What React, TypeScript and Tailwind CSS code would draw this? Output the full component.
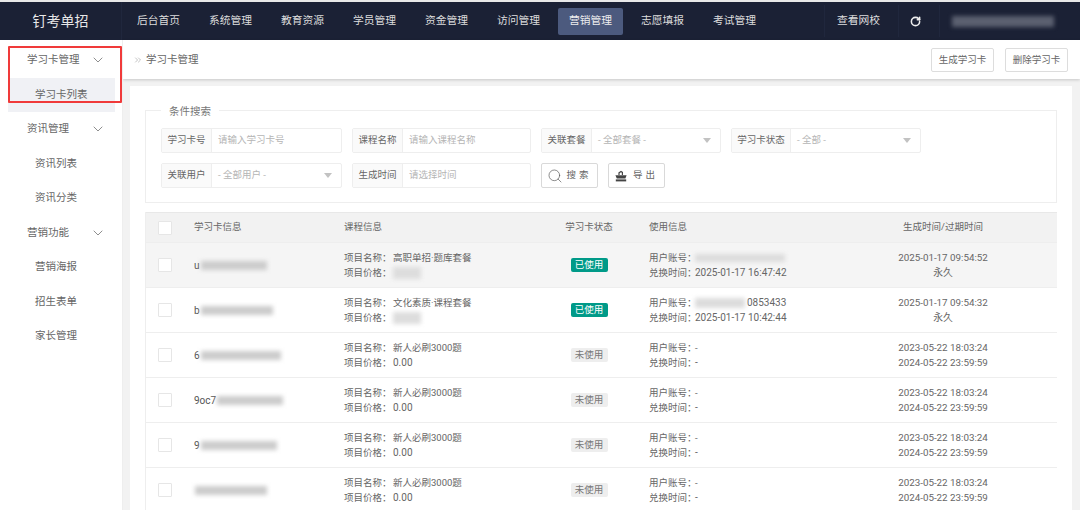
import { RotateCw, Search, ChevronDown, ChevronsRight } from "lucide-react";

const navs = ['后台首页', '系统管理', '教育资源', '学员管理', '资金管理', '访问管理', '营销管理', '志愿填报', '考试管理'];

const menus = [
    { title: '学习卡管理', subs: ['学习卡列表'] },
    { title: '资讯管理', subs: ['资讯列表', '资讯分类'] },
    { title: '营销功能', subs: ['营销海报', '招生表单', '家长管理'] },
];

interface rowType {
    prefix: string;
    nameW: number;
    course: string;
    used: boolean;
    user: string;
    time: string;
    created: string;
    expired: string;
}

const rows: rowType[] = [
    { prefix: 'u', nameW: 66, course: '高职单招·题库套餐', used: true, user: '', time: '2025-01-17 16:47:42', created: '2025-01-17 09:54:52', expired: '永久' },
    { prefix: 'b', nameW: 72, course: '文化素质·课程套餐', used: true, user: '0853433', time: '2025-01-17 10:42:44', created: '2025-01-17 09:54:32', expired: '永久' },
    { prefix: '6', nameW: 80, course: '新人必刷3000题', used: false, user: '-', time: '-', created: '2023-05-22 18:03:24', expired: '2024-05-22 23:59:59' },
    { prefix: '9oc7', nameW: 66, course: '新人必刷3000题', used: false, user: '-', time: '-', created: '2023-05-22 18:03:24', expired: '2024-05-22 23:59:59' },
    { prefix: '9', nameW: 76, course: '新人必刷3000题', used: false, user: '-', time: '-', created: '2023-05-22 18:03:24', expired: '2024-05-22 23:59:59' },
    { prefix: '', nameW: 72, course: '新人必刷3000题', used: false, user: '-', time: '-', created: '2023-05-22 18:03:24', expired: '2024-05-22 23:59:59' },
];

function Field({ label, holder, w, labelW = 'w-[50px]', select }: { label: string; holder: string; w: string; labelW?: string; select?: boolean }) {
    return (
        <div className={`${w} h-[25px] flex border border-[#eeeeee] rounded-[2px] text-[9.5px]`}>
            <div className={`${labelW} shrink-0 bg-[#fafafa] border-r border-[#eeeeee] flex items-center justify-center text-[#666666]`}>{label}</div>
            <div className="flex-1 flex items-center justify-between px-[6px] text-[#b5b5b5]">
                <span>{holder}</span>
                {select && <span className="mr-[3px] w-0 h-0 border-x-[4px] border-x-transparent border-t-[5px] border-t-[#c2c2c2]"></span>}
            </div>
        </div>
    );
}

function Check() {
    return <div className="w-[14px] h-[14px] bg-white border border-[#e6e6e6] rounded-[1px] shrink-0"></div>;
}

export default function App() {
    return (
        <div className="w-[1080px] h-[510px] overflow-hidden flex flex-col bg-[#f2f2f2] text-[#666666] font-['Roboto','Noto_Sans_CJK_SC',sans-serif]">
            <div className="h-[2px] shrink-0 bg-[#e8e8e8]"></div>
            <header className="h-[38px] shrink-0 bg-[#1b2135] flex items-center text-white">
                <div className="w-[122px] h-full shrink-0 flex items-center justify-center text-[14px] text-[#e8e8e8] border-r border-[#20273d]">钉考单招</div>
                <nav className="flex gap-[7px] pl-[4px]">
                    {navs.map(n => (
                        <div key={n} className={`h-[27px] w-[65px] flex items-center justify-center text-[10.75px] rounded-[2px] ${n === '营销管理' ? 'bg-[#4c5a7e] text-[#eeeeee]' : 'text-[#dddddd]'}`}>{n}</div>
                    ))}
                </nav>
                <div className="ml-auto flex h-[32px] items-center">
                    <div className="w-[75px] h-full flex items-center justify-center pr-[6px] text-[10.75px] text-[#dddddd] border-x border-[#20273d]">查看网校</div>
                    <div className="w-[41px] h-full flex items-center justify-center pr-[8px] border-r border-[#20273d]">
                        <RotateCw size={11} strokeWidth={3.4} color="#eeeeee" />
                    </div>
                    <div className="w-[140px] h-full flex items-center pl-[12px]">
                        <div className="w-[102px] h-[11px] bg-[#5b6070] blur-[2px]"></div>
                    </div>
                </div>
            </header>
            <div className="flex-1 flex min-h-0">
                <aside className="relative w-[123px] shrink-0 bg-white border-r border-[#eeeeee] pl-[8px] pr-[7px] pt-[3px]">
                    {menus.map(m => (
                        <div key={m.title}>
                            <div className="h-[34.5px] flex items-center justify-between pl-[19px] pr-[9px] text-[10.5px] text-[#666666]">
                                <span>{m.title}</span>
                                <ChevronDown size={16} strokeWidth={1} color="#555555" />
                            </div>
                            {m.subs.map(s => (
                                <div key={s} className={`h-[34.5px] flex items-center pl-[27px] text-[10.5px] text-[#666666] ${s === '学习卡列表' ? 'bg-[#f0f1f5]' : ''}`}>{s}</div>
                            ))}
                        </div>
                    ))}
                    <div className="absolute left-[8px] top-[6px] w-[114px] h-[57px] border-2 border-[#f03a3a] rounded-[1px]"></div>
                </aside>
                <main className="flex-1 min-w-0 flex flex-col">
                    <div className="h-[39px] shrink-0 bg-white shadow-[0_1px_3px_rgba(0,0,0,0.18)] flex items-center pl-[10px] pr-[12px]">
                        <ChevronsRight size={10} strokeWidth={1.2} color="#888888" />
                        <span className="ml-[3px] text-[10.5px] text-[#666666]">学习卡管理</span>
                        <div className="ml-auto flex gap-[11px]">
                            <div className="w-[63px] h-[24px] mt-[1px] bg-white border border-[#dddddd] rounded-[2px] flex items-center justify-center text-[9.5px]">生成学习卡</div>
                            <div className="w-[63px] h-[24px] mt-[1px] bg-white border border-[#dddddd] rounded-[2px] flex items-center justify-center text-[9.5px]">删除学习卡</div>
                        </div>
                    </div>
                    <div className="mt-[7px] ml-[7px] mr-[8px] flex-1 min-h-0 overflow-hidden bg-white px-[15px] pt-[24px]">
                        <div className="relative h-[93px] border border-[#eeeeee] pl-[15px] pr-[15px] pt-[17px]">
                            <span className="absolute left-[15px] top-[-7px] bg-white px-[8px] text-[10.5px] text-[#777777]">条件搜索</span>
                            <div className="flex gap-[10px]">
                                <Field label="学习卡号" holder="请输入学习卡号" w="w-[181px]" />
                                <Field label="课程名称" holder="请输入课程名称" w="w-[179px]" />
                                <Field label="关联套餐" holder="- 全部套餐 -" w="w-[180px]" select />
                                <Field label="学习卡状态" holder="- 全部 -" w="w-[190px]" labelW="w-[59px]" select />
                            </div>
                            <div className="flex gap-[10px] mt-[10px]">
                                <Field label="关联用户" holder="- 全部用户 -" w="w-[181px]" select />
                                <Field label="生成时间" holder="请选择时间" w="w-[179px]" />
                                <div className="w-[57px] h-[25px] border border-[#d9d9d9] rounded-[2px] flex items-center justify-center gap-[3px] text-[9.5px]">
                                    <Search size={16} strokeWidth={1} color="#555555" />
                                    <span className="tracking-[3px]">搜索</span>
                                </div>
                                <div className="w-[57px] h-[25px] border border-[#d9d9d9] rounded-[2px] flex items-center justify-center gap-[6px] text-[9.5px]">
                                    <svg width="12" height="12" viewBox="0 0 12 12">
                                        <path d="M3.4 5V2.6L6 0.8l2 1.2v3H6.8V2.8L6 2.3l-1.4 1V5z" fill="#444444" />
                                        <path d="M0.4 5.2h11.2L10.4 8.6H1.8z" fill="#444444" />
                                        <path d="M0.8 9.4h10.4v2H0.8z" fill="#444444" />
                                    </svg>
                                    <span className="tracking-[3px]">导出</span>
                                </div>
                            </div>
                        </div>
                        <div className="mt-[9px] border-l border-[#eeeeee]">
                            <div className="h-[30px] bg-[#f2f2f2] border-t border-[#e8e8e8] flex items-center text-[9.5px] text-[#666666]">
                                <div className="w-[48px] pl-[12px]"><Check /></div>
                                <div className="w-[150px]">学习卡信息</div>
                                <div className="w-[200px]">课程信息</div>
                                <div className="w-[90px] text-center">学习卡状态</div>
                                <div className="w-[15px]"></div>
                                <div className="w-[210px]">使用信息</div>
                                <div className="w-[168px] text-center">生成时间/过期时间</div>
                            </div>
                            {rows.map((r, i) => (
                                <div key={i} className={`h-[45px] flex items-center text-[9.5px] border-t border-[#eeeeee] ${i === 0 ? 'bg-[#f5f5f5]' : ''}`}>
                                    <div className="w-[48px] pl-[12px]"><Check /></div>
                                    <div className="w-[150px] flex items-center">
                                        <span className="text-[#555555] text-[10px]">{r.prefix}</span>
                                        <span className="h-[9px] bg-[#cccccc] blur-[2px] ml-[1px]" style={{ width: r.nameW }}></span>
                                    </div>
                                    <div className="w-[200px] leading-[15px]">
                                        <div className="flex"><span className="w-[49px] shrink-0 whitespace-nowrap">项目名称：</span><span>{r.course}</span></div>
                                        <div className="flex items-center">
                                            <span className="w-[49px] shrink-0 whitespace-nowrap">项目价格：</span>
                                            {i < 2 ? <span className="w-[28px] h-[12px] bg-[#dddddd] blur-[2px]"></span> : <span className="text-[10px]">0.00</span>}
                                        </div>
                                    </div>
                                    <div className="w-[90px] flex justify-center">
                                        {r.used
                                            ? <span className="w-[37px] h-[14px] rounded-[2px] bg-[#009a88] text-white text-[9.5px] flex items-center justify-center">已使用</span>
                                            : <span className="w-[37px] h-[14px] rounded-[2px] bg-[#eeeeee] text-[#777777] text-[9.5px] flex items-center justify-center">未使用</span>}
                                    </div>
                                    <div className="w-[15px]"></div>
                                    <div className="w-[210px] leading-[15px]">
                                        <div className="flex items-center">
                                            <span className="w-[46px] shrink-0 whitespace-nowrap">用户账号：</span>
                                            {r.user === '-' && <span>-</span>}
                                            {r.user === '' && <span className="w-[90px] h-[8px] bg-[#dcdcdc] blur-[2px]"></span>}
                                            {r.user === '0853433' && <><span className="w-[50px] h-[10px] bg-[#dcdcdc] blur-[2px]"></span><span className="text-[10px] ml-[2px]">{r.user}</span></>}
                                        </div>
                                        <div className="flex"><span className="w-[46px] shrink-0 whitespace-nowrap">兑换时间：</span><span className="text-[10px]">{r.time}</span></div>
                                    </div>
                                    <div className="w-[168px] text-center leading-[15px] text-[9.8px]">
                                        <div>{r.created}</div>
                                        <div>{r.expired}</div>
                                    </div>
                                </div>
                            ))}
                        </div>
                    </div>
                </main>
            </div>
        </div>
    );
}
